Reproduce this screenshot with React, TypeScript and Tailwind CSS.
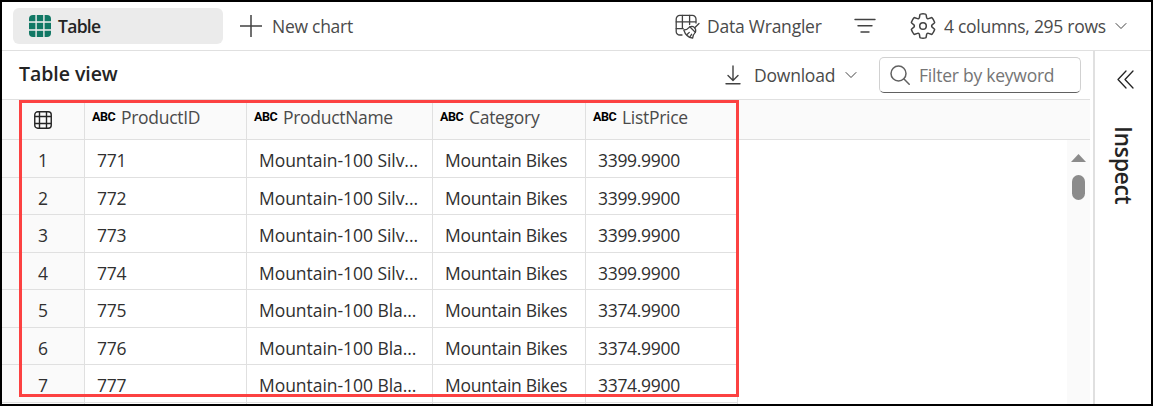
import React from "react";

const columns = [
  { name: "ProductID", width: "w-[162px]", tracking: "tracking-[-0.3px]" },
  { name: "ProductName", width: "w-[186px]", tracking: "tracking-[-0.05px]" },
  { name: "Category", width: "w-[153px]", tracking: "tracking-[-0.3px]" },
  { name: "ListPrice", width: "w-[152px]", tracking: "tracking-[-0.3px]" },
];

const rows = [
  ["771", "Mountain-100 Silv...", "Mountain Bikes", "3399.9900"],
  ["772", "Mountain-100 Silv...", "Mountain Bikes", "3399.9900"],
  ["773", "Mountain-100 Silv...", "Mountain Bikes", "3399.9900"],
  ["774", "Mountain-100 Silv...", "Mountain Bikes", "3399.9900"],
  ["775", "Mountain-100 Bla...", "Mountain Bikes", "3374.9900"],
  ["776", "Mountain-100 Bla...", "Mountain Bikes", "3374.9900"],
  ["777", "Mountain-100 Bla...", "Mountain Bikes", "3374.9900"],
];

function TableFilledIcon() {
  return (
    <svg className="ml-5 size-[22px] shrink-0" viewBox="0 0 22 22" fill="#117865">
      <path d="M0 6.2V4a4 4 0 0 1 4-4h2.4v6.2z" />
      <path d="M7.8 0h6.4v6.2H7.8z" />
      <path d="M15.6 0H18a4 4 0 0 1 4 4v2.2h-6.4z" />
      <path d="M0 7.8h6.4v6.4H0z" />
      <path d="M7.8 7.8h6.4v6.4H7.8z" />
      <path d="M15.6 7.8H22v6.4h-6.4z" />
      <path d="M0 15.8h6.4V22H4a4 4 0 0 1-4-4z" />
      <path d="M7.8 15.8h6.4V22H7.8z" />
      <path d="M15.6 15.8H22V18a4 4 0 0 1-4 4h-2.4z" />
    </svg>
  );
}

function WranglerIcon() {
  return (
    <svg className="h-[25px] w-[25px] shrink-0" viewBox="0 0 25 25" fill="none" stroke="#424242" strokeWidth="1.3" strokeLinecap="round" strokeLinejoin="round">
      <path d="M7 21H4.800A3.600 3.600 0 0 1 1.200 17.400V5A3.600 3.600 0 0 1 4.800 1.400h12.600A3.600 3.600 0 0 1 21 5v4" />
      <path d="M7.400 1.500v13M14.600 1.500v9M1.200 7.800h19.500M1.200 14.600h7" />
      <path d="M24 9.500l-4.300 4.300" />
      <path d="M14.800 12.800c1.700-.7 3.500-.4 4.700.8 1.200 1.200 1.500 3.100.8 4.800z" />
      <path d="M14.800 12.800c-1.700 2-3.800 3-6 3.200 1.200 4 4.400 7.400 8.800 8.200.2-2.400 1.100-4.300 2.700-5.800" />
      <path d="M12.300 20.300l2-1.900M15.200 22.300l1.400-2" />
    </svg>
  );
}

function GearIcon() {
  return (
    <svg className="h-[26px] w-[26px] shrink-0" viewBox="0.900 0.900 18.200 18.200" fill="none" stroke="#424242" strokeWidth="1.050" strokeLinejoin="round">
      <path d="M1.910 7.380A8.500 8.500 0 0 1 3.700 4.300a.5.500 0 0 1 .540-.130l1.920.680a1 1 0 0 0 1.320-.760l.360-2a.5.500 0 0 1 .400-.400 8.530 8.530 0 0 1 3.550 0c.200.040.350.200.380.400l.370 2a1 1 0 0 0 1.320.760l1.920-.680a.5.500 0 0 1 .540.130 8.500 8.500 0 0 1 1.780 3.080c.060.200 0 .400-.150.540l-1.560 1.320a1 1 0 0 0 0 1.520l1.560 1.320a.5.500 0 0 1 .150.540 8.500 8.500 0 0 1-1.780 3.080.5.500 0 0 1-.540.130l-1.920-.680a1 1 0 0 0-1.320.760l-.370 2a.5.500 0 0 1-.380.400 8.530 8.530 0 0 1-3.560 0 .5.500 0 0 1-.390-.400l-.360-2a1 1 0 0 0-1.320-.760l-1.920.680a.5.500 0 0 1-.540-.130 8.500 8.500 0 0 1-1.780-3.080.5.500 0 0 1 .150-.540l1.560-1.320a1 1 0 0 0 0-1.520L2.060 7.920a.5.500 0 0 1-.150-.540Z" />
      <circle cx="10" cy="10" r="2.300" />
    </svg>
  );
}

function Chevron() {
  return (
    <svg className="h-[8px] w-[12px] shrink-0" viewBox="0 0 12 8" fill="none" stroke="#424242" strokeWidth="1" strokeLinecap="round" strokeLinejoin="round">
      <path d="M1 1.500l5 5 5-5" />
    </svg>
  );
}

function GridIcon() {
  return (
    <svg className="size-[18px]" viewBox="0 0 18 18" fill="none" stroke="#242424" strokeWidth="1.400">
      <rect x=".75" y=".75" width="16.500" height="16.500" rx="3" />
      <path d="M5.500 1v16M12.500 1v16M1 5.500h16M1 12.500h16" />
    </svg>
  );
}

export default function App() {
  return (
    <div className="relative flex h-[406px] w-[1153px] flex-col overflow-hidden border-2 border-black bg-white font-['Open_Sans',sans-serif] text-[17.500px] leading-6 whitespace-nowrap text-[#4a4a4a]">
      <header className="flex h-[49px] shrink-0 items-center border-b border-[#e0e0e0]">
        <div className="ml-[11px] flex h-9 w-[210px] items-center rounded-md bg-[#ebebeb]">
          <div className="-ml-1 flex items-center">
            <TableFilledIcon />
            <span className="ml-[7px] font-semibold tracking-[-0.7px] text-[#242424]">Table</span>
          </div>
        </div>
        <svg className="ml-[17px] size-[22px]" viewBox="0 0 22 22" stroke="#424242" strokeWidth="1.500">
          <path d="M11 0v22M0 11h22" />
        </svg>
        <span className="ml-[10px] w-[81px] tracking-[-0.270px]">New chart</span>
        <div className="ml-[322px] flex items-center">
          <WranglerIcon />
          <span className="ml-[7px] w-[116px] tracking-[-0.230px]">Data Wrangler</span>
        </div>
        <svg className="ml-[31px] h-[16px] w-[22px]" viewBox="0 0 22 16" stroke="#424242" strokeWidth="1.400" strokeLinecap="round">
          <path d="M1 1.500h20M4 7.700h14M7 14h8" />
        </svg>
        <div className="ml-[34px] flex items-center">
          <GearIcon />
          <span className="ml-[8px] mr-[9px] w-[162px] tracking-[-0.280px]">4 columns, 295 rows</span>
          <Chevron />
        </div>
      </header>

      <div className="flex min-h-0 flex-1">
        <main className="flex w-[1088px] shrink-0 flex-col">
          <div className="flex h-[49px] shrink-0 items-center border-b border-[#e0e0e0]">
            <h1 className="ml-[17px] w-[100px] pb-[3px] text-[19.500px] font-semibold tracking-[-0.050px] text-[#242424]">Table view</h1>
            <svg className="ml-[606px] h-[20px] w-[16px]" viewBox="0 0 16 20" fill="none" stroke="#424242" strokeWidth="1.400" strokeLinecap="round" strokeLinejoin="round">
              <path d="M8 1v14M3 10.500l5 5 5-5M1 18.700h14" />
            </svg>
            <span className="ml-[13px] mr-[9px] w-[82px] tracking-[-0.220px]">Download</span>
            <Chevron />
            <div className="ml-[22px] flex h-9 w-[202px] items-center rounded-[5px] border border-[#d1d1d1] border-b-[#616161]">
              <svg className="ml-[10px] size-[20px]" viewBox="0 0 20 20" fill="none" stroke="#616161" strokeWidth="1.500" strokeLinecap="round">
                <circle cx="8.500" cy="8.500" r="7.500" />
                <path d="M14 14l5.200 5.200" />
              </svg>
              <span className="ml-[9px] tracking-[-0.240px] text-[#757575]">Filter by keyword</span>
            </div>
          </div>

          <div className="flex h-[40px] shrink-0 border-b border-[#e0e0e0] bg-[#fafafa]">
            <div className="flex w-[83px] items-center border-r border-[#e0e0e0] pl-[32px]">
              <GridIcon />
            </div>
            {columns.map((c) => (
              <div key={c.name} className={`${c.width} flex border-r border-[#e0e0e0] pt-[6px] pl-[7px] last:border-r-0`}>
                <span className="-mt-px w-[29px] font-['Roboto',sans-serif] text-[12.500px] font-bold tracking-[-0.400px] text-black">ABC</span>
                <span className="-mt-px tracking-[-0.300px]">{c.name}</span>
              </div>
            ))}
          </div>

          <div className="flex min-h-0 flex-1">
            <div className="w-[736px] overflow-hidden text-[#303030]">
              {rows.map((row, i) => (
                <div key={row[0]} className="flex h-[38px] border-b border-[#e0e0e0] even:h-[37px]">
                  <div className="flex w-[83px] items-center border-r border-[#e0e0e0] bg-[#fafafa] pt-[3px] pl-[36px]">{i + 1}</div>
                  {row.map((value, j) => (
                    <div key={j} className={`${columns[j].width} ${columns[j].tracking} flex items-center border-r border-[#e0e0e0] pt-[3px] pl-3`}>
                      {value}
                    </div>
                  ))}
                </div>
              ))}
              <div className="flex h-[38px]">
                <div className="w-[83px] border-r border-[#e0e0e0] bg-[#fafafa]" />
                {columns.map((c) => (
                  <div key={c.name} className={`${c.width} border-r border-[#e0e0e0]`} />
                ))}
              </div>
            </div>
            <div className="ml-auto flex w-[23px] flex-col items-center bg-[#fafafa]">
              <svg className="mt-[14px] h-[8px] w-[15px]" viewBox="0 0 15 8" fill="#8b8b8b">
                <path d="M7.500 0L15 8H0z" />
              </svg>
              <div className="mt-[13px] h-[25px] w-[13px] rounded-full bg-[#8b8b8b]" />
            </div>
          </div>
        </main>

        <aside className="ml-[3px] flex flex-1 flex-col items-center border-l-2 border-[#e0e0e0]">
          <svg className="mt-[19px] ml-[4px] h-[19px] w-[17px]" viewBox="0 0 17 19" fill="none" stroke="#242424" strokeWidth="1.300" strokeLinecap="round" strokeLinejoin="round">
            <path d="M9 1L1 9.500L9 18M16 1L8 9.500L16 18" />
          </svg>
          <span className="mt-[37px] ml-[1px] text-[23px] leading-[28px] font-semibold tracking-[-0.400px] text-[#242424] [writing-mode:vertical-rl]">Inspect</span>
        </aside>
      </div>

      <div className="pointer-events-none absolute top-[98px] left-[17px] h-[297px] w-[720px] border-3 border-[#fc4141]" />
    </div>
  );
}
